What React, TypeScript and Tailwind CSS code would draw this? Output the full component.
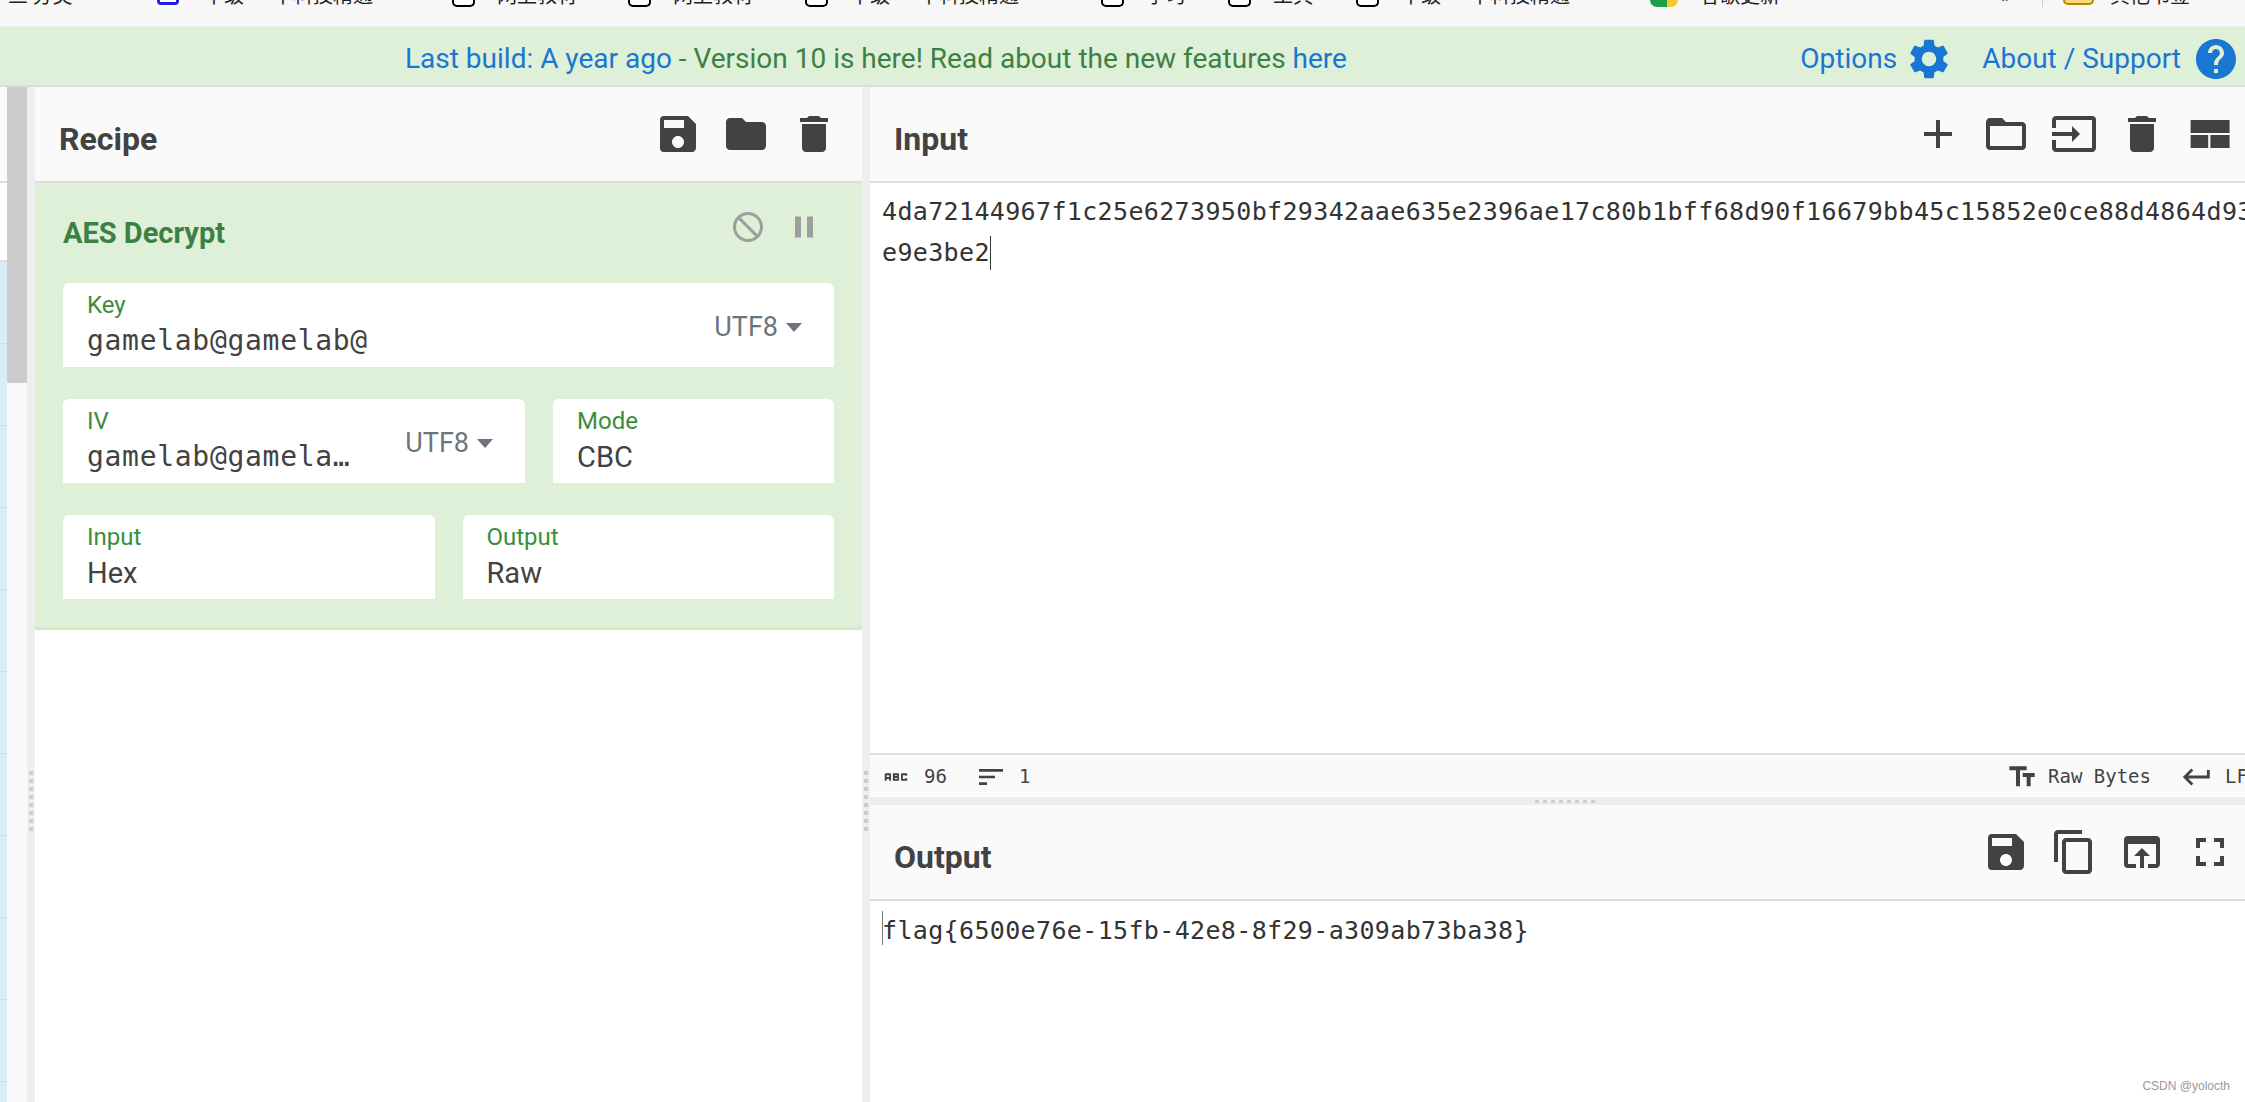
import type { ReactNode } from "react";
import {
    MdAbc, MdAdd, MdContentCopy, MdDelete, MdFolder, MdFolderOpen, MdFullscreen, MdHelp, MdInput,
    MdKeyboardReturn, MdNotInterested, MdOpenInBrowser, MdPause, MdSave, MdSettings, MdSort, MdTextFields,
} from "react-icons/md";

const UI = "font-['Roboto','Liberation_Sans',sans-serif]";
const MONO = "font-['DejaVu_Sans_Mono','Liberation_Mono',monospace]";

const Bookmark = ({ left, text, width, kind }: { left: number; text: string; width: number; kind?: string }) => (
    <div className="flex items-start shrink-0" style={{ marginLeft: left, width }}>
        {kind === "box" && <div className="w-[23px] h-[7px] mr-[22px] shrink-0 border-x-2 border-b-2 border-black rounded-b-[5px] bg-white" />}
        {kind === "blue" && <div className="w-[31px] h-[7px] mr-[21px] shrink-0 bg-white rounded-b-md flex justify-center"><div className="w-[22px] h-[5px] border-x-[3px] border-b-[3px] border-[#2020e0] rounded-b-[4px]" /></div>}
        {kind === "shield" && <div className="w-[28px] h-[7px] mr-[22px] shrink-0 rounded-b-full bg-[linear-gradient(90deg,#1e9e4a_60%,#f7c82f_60%)]" />}
        {kind === "folder" && <div className="w-[31px] h-[5px] mr-[16px] shrink-0 border-x-2 border-b-2 border-[#b38a00] rounded-b-[5px] bg-[#f8d776]" />}
        <span className="-mt-[17px] text-[20px] leading-[24px] text-[#222] whitespace-nowrap font-['Noto_Sans_CJK_SC',sans-serif]">{text}</span>
    </div>
);

const BookmarkBar = () => (
    <div className="h-[27px] shrink-0 bg-[#f7f7f7] border-b border-[#ececec] flex overflow-hidden">
        <Bookmark left={8} width={144} text="三 分类" />
        <Bookmark left={0} width={300} kind="blue" text="中级 · 中科技精通" />
        <Bookmark left={0} width={176} kind="box" text="网上教材" />
        <Bookmark left={0} width={177} kind="box" text="网上教材" />
        <Bookmark left={0} width={296} kind="box" text="中级 · 中科技精通" />
        <Bookmark left={0} width={127} kind="box" text="学习" />
        <Bookmark left={0} width={128} kind="box" text="工具" />
        <Bookmark left={0} width={294} kind="box" text="中级 · 中科技精通" />
        <Bookmark left={0} width={351} kind="shield" text="谷歌更新" />
        <Bookmark left={0} width={41} text="»" />
        <div className="w-px h-[7px] mr-[20px] shrink-0 bg-[#ccc]" />
        <Bookmark left={0} width={180} kind="folder" text="其他书签" />
    </div>
);

const Banner = () => (
    <div className={`h-[60px] shrink-0 pt-[6px] bg-[#dff0d8] border-b-2 border-[#ddd] flex items-center text-[#1976d2] ${UI}`}>
        <div className="ml-[405px] text-[28px] whitespace-nowrap">
            Last build: A year ago <span className="text-[#3d8043]">- Version 10 is here! Read about the new features</span> here
        </div>
        <div className="ml-auto flex items-center pr-[5px] text-[28px]">
            <span>Options</span>
            <MdSettings size={48} className="ml-[8px]" />
            <span className="ml-[29px]">About / Support</span>
            <MdHelp size={48} className="ml-[11px]" />
        </div>
    </div>
);

const IconBtn = ({ children }: { children: ReactNode }) => (
    <div className="w-[68px] flex justify-center text-[#424242]">{children}</div>
);

const PanelHeader = ({ title, children, className = "" }: { title: string; children: ReactNode; className?: string }) => (
    <div className={`h-[96px] shrink-0 bg-[#fafafa] border-b-2 border-[#ddd] flex items-center justify-between ${className}`}>
        <span className={`text-[32px] font-bold text-[#424242] pt-[10px] ${UI}`}>{title}</span>
        <div className="flex items-center">{children}</div>
    </div>
);

const Field = ({ label, value, mono, utf8, className = "" }: { label: string; value: string; mono?: boolean; utf8?: boolean; className?: string }) => (
    <div className={`h-[84px] bg-white rounded-t-[6px] pl-[24px] flex ${className}`}>
        <div className="flex-1 min-w-0 flex flex-col pt-[8px]">
            <div className={`h-[28px] leading-[28px] text-[24px] text-[#388e3c] ${UI}`}>{label}</div>
            {mono
                ? <div className={`h-[42px] pt-[1px] leading-[42px] text-[28px] tracking-[0.7px] text-[#424242] truncate ${MONO}`}>{value}</div>
                : <div className={`h-[42px] pt-[1px] leading-[42px] text-[29px] text-[#424242] ${UI}`}>{value}</div>}
        </div>
        {utf8 && (
            <div className={`flex items-center h-[88px] pl-[54px] pr-[32px] text-[27px] text-[#6c757d] ${UI}`}>
                <span>UTF8</span>
                <span className="ml-[8px] w-0 h-0 border-x-[8px] border-x-transparent border-t-[9px] border-t-[#6c757d]" />
            </div>
        )}
    </div>
);

const Dots = ({ vertical }: { vertical?: boolean }) => (
    <div className={vertical ? "flex flex-col gap-[4px]" : "flex gap-[4px]"}>
        {Array.from({ length: 8 }).map((_, i) => (
            <div key={i} className={vertical ? "w-[4px] h-[4px] bg-[#ccc]" : "w-[4px] h-[3px] bg-[#ccc]"} />
        ))}
    </div>
);

const Gutter = () => (
    <div className="w-[8px] shrink-0 bg-[#eee] flex flex-col items-center pt-[684px]">
        <Dots vertical />
    </div>
);

const LeftStrip = () => (
    <div className="w-[7px] shrink-0 flex flex-col bg-[#d9edf7]">
        <div className="h-[94px] shrink-0 bg-[#fafafa]" />
        <div className="h-[81px] shrink-0 bg-white border-y-2 border-[#ddd]" />
        <div className="flex flex-col pt-[81px] gap-[81px]">
            {Array.from({ length: 10 }).map((_, i) => (
                <div key={i} className="h-px bg-[#bfe6ee]" />
            ))}
        </div>
    </div>
);

const Scrollbar = () => (
    <div className="w-[20px] shrink-0 bg-[#fafafa]">
        <div className="h-[296px] bg-[#ccc]" />
    </div>
);

const RecipePanel = () => (
    <div className="w-[827px] shrink-0 flex flex-col bg-white">
        <PanelHeader title="Recipe" className="pl-[24px] pr-[14px]">
            <IconBtn><MdSave size={48} /></IconBtn>
            <IconBtn><MdFolder size={48} /></IconBtn>
            <IconBtn><MdDelete size={48} /></IconBtn>
        </PanelHeader>
        <div className="bg-[#dff0d8] border-b-[3px] border-[#d6e9c6] px-[28px] pb-[28px]">
            <div className="h-[100px] flex justify-between">
                <span className={`mt-[32px] text-[29px] leading-[36px] font-bold text-[#3d8043] ${UI}`}>AES Decrypt</span>
                <div className="flex mt-[26px] h-[36px] gap-[20px] pr-[12px] text-[#9e9e9e]">
                    <MdNotInterested size={36} />
                    <MdPause size={36} />
                </div>
            </div>
            <Field label="Key" value="gamelab@gamelab@" mono utf8 />
            <div className="flex gap-[28px] mt-[32px]">
                <Field label="IV" value="gamelab@gamelab@" mono utf8 className="w-[462px]" />
                <Field label="Mode" value="CBC" className="flex-1" />
            </div>
            <div className="flex gap-[28px] mt-[32px]">
                <Field label="Input" value="Hex" className="flex-1" />
                <Field label="Output" value="Raw" className="flex-1" />
            </div>
        </div>
    </div>
);

const InputStatus = () => (
    <div className={`h-[44px] shrink-0 pt-[1px] bg-[#fafafa] border-t-2 border-[#ddd] flex items-center text-[19px] text-[#424242] whitespace-nowrap ${MONO}`}>
        <MdAbc size={30} className="ml-[11px]" />
        <span className="ml-[13px]">96</span>
        <MdSort size={32} className="ml-[28px]" />
        <span className="ml-[12px]">1</span>
        <MdTextFields size={32} className="ml-auto" />
        <span className="ml-[10px]">Raw Bytes</span>
        <MdKeyboardReturn size={34} className="ml-[29px]" />
        <span className="ml-[11px] w-[20px] overflow-hidden">LF</span>
    </div>
);

const LayoutIcon = () => (
    <svg width={48} height={48} viewBox="0 0 24 24" fill="currentColor">
        <path d="M2.3 5h19.5v6.5H2.3zM2.3 12.5h8.8V19H2.3zM12.2 12.5h9.6V19h-9.6z" />
    </svg>
);

const IOPanel = () => (
    <div className="flex-1 min-w-0 flex flex-col bg-white">
        <PanelHeader title="Input" className="pl-[24px] pr-[1px]">
            <IconBtn><MdAdd size={48} /></IconBtn>
            <IconBtn><MdFolderOpen size={48} /></IconBtn>
            <IconBtn><MdInput size={48} /></IconBtn>
            <IconBtn><MdDelete size={48} /></IconBtn>
            <IconBtn><LayoutIcon /></IconBtn>
        </PanelHeader>
        <div className={`h-[570px] shrink-0 pt-[8px] pl-[12px] overflow-hidden text-[25px] leading-[41px] tracking-[0.35px] text-[#333] whitespace-nowrap ${MONO}`}>
            <div>4da72144967f1c25e6273950bf29342aae635e2396ae17c80b1bff68d90f16679bb45c15852e0ce88d4864d93</div>
            <div className="flex items-center">e9e3be2<span className="w-px h-[34px] bg-[#333]" /></div>
        </div>
        <InputStatus />
        <div className="h-[8px] shrink-0 pl-[14px] bg-[#eee] flex justify-center items-center">
            <Dots />
        </div>
        <PanelHeader title="Output" className="pl-[24px] pr-[1px]">
            <IconBtn><MdSave size={48} /></IconBtn>
            <IconBtn><MdContentCopy size={48} /></IconBtn>
            <IconBtn><MdOpenInBrowser size={48} /></IconBtn>
            <IconBtn><MdFullscreen size={48} /></IconBtn>
        </PanelHeader>
        <div className={`flex-1 pt-[8px] pl-[12px] text-[25px] leading-[43px] tracking-[0.35px] text-[#333] whitespace-nowrap flex items-start ${MONO}`}>
            <span className="w-px h-[34px] mt-[2px] bg-[#777] -mr-px" />
            flag{"{"}6500e76e-15fb-42e8-8f29-a309ab73ba38{"}"}
        </div>
    </div>
);

const App = () => {
    return (
        <div className="relative w-[2245px] h-[1102px] overflow-hidden bg-white flex flex-col">
            <BookmarkBar />
            <Banner />
            <div className="flex-1 min-h-0 flex">
                <LeftStrip />
                <Scrollbar />
                <Gutter />
                <RecipePanel />
                <Gutter />
                <IOPanel />
            </div>
            <div className="absolute right-[15px] bottom-[7px] text-[12px] text-[#999] font-['Liberation_Sans',sans-serif]">CSDN @yolocth</div>
        </div>
    );
};

export default App;
